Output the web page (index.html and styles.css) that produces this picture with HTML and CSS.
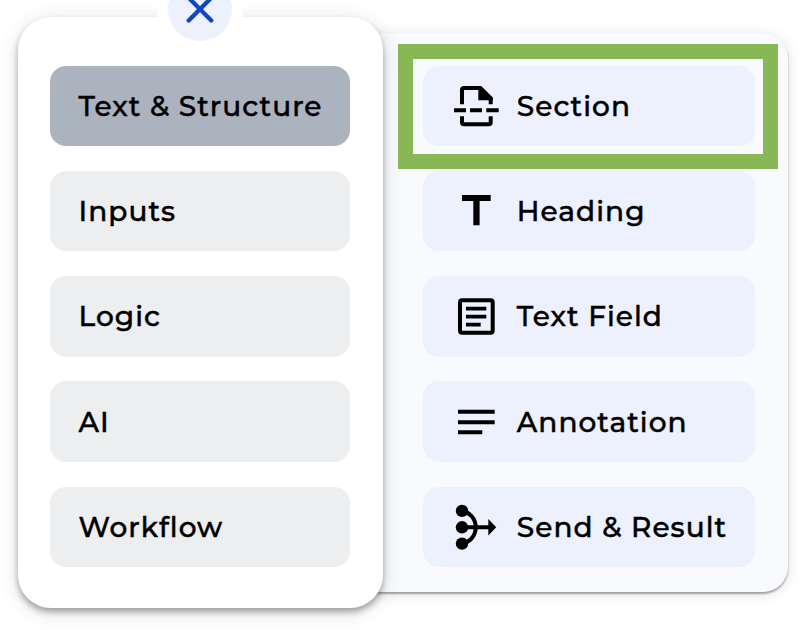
FILE: index.html
```html
<!DOCTYPE html>
<html lang="en">
<head>
<meta charset="UTF-8">
<meta name="viewport" content="width=device-width, initial-scale=1.0">
<title>Add Element</title>

<link rel="stylesheet" href="styles.css">
</head>

<body>

<div class="picker">
    <div class="categories">
        <button class="close-btn" aria-label="Close">
            <svg viewBox="0 0 64 64"><path d="M20.7 20.8 43.3 43.4M43.3 20.8 20.7 43.4"/></svg>
        </button>
        <button class="category active">Text &amp; Structure</button>
        <button class="category">Inputs</button>
        <button class="category">Logic</button>
        <button class="category">AI</button>
        <button class="category">Workflow</button>
    </div>

    <div class="elements">
        <button class="element highlighted">
            <svg class="icon" viewBox="0 0 48 48">
                <path class="line" d="M10 22.3V8Q10 6 12 6H28L38.7 16.5V22.3M10 34.3V40.2Q10 42.2 12 42.2H36.7Q38.7 42.2 38.7 40.2V34.3"/>
                <path d="M26.3 4H29L40.7 15.5V18.3H26.3ZM2 26.3H14V30.3H2ZM18 26.3H30V30.3H18ZM34.3 26.3H46.7V30.3H34.3Z"/>
            </svg>
            <span>Section</span>
        </button>
        <button class="element">
            <svg class="icon" viewBox="0 0 48 48">
                <path d="M10 8H38.7V14.1H27.6V38.3H21.3V14.1H10Z"/>
            </svg>
            <span>Heading</span>
        </button>
        <button class="element">
            <svg class="icon" viewBox="0 0 48 48">
                <rect class="line" x="8" y="8.3" width="32.7" height="32.4" rx="2"/>
                <path d="M14 14.8H34.3V18.6H14ZM14 22.8H34.3V26.6H14ZM14 30.8H28.7V34.6H14Z"/>
            </svg>
            <span>Text Field</span>
        </button>
        <button class="element">
            <svg class="icon" viewBox="0 0 48 48">
                <path d="M6 11.8H42.7V15.8H6ZM6 22.2H42.7V26.2H6ZM6 32.3H30.3V36.3H6Z"/>
            </svg>
            <span>Annotation</span>
        </button>
        <button class="element">
            <svg class="icon" viewBox="0 0 48 48">
                <path class="line" d="M10 7.7C17 9 23.7 15 23.7 24.3S17 39.5 10 40.7M10 24.3H38"/>
                <circle cx="10" cy="7.9" r="6.2"/>
                <circle cx="10" cy="24.3" r="6.2"/>
                <circle cx="10" cy="40.6" r="6.2"/>
                <path d="M36.3 16 44.2 24.2 36.3 32.4Z"/>
            </svg>
            <span>Send &amp; Result</span>
        </button>
    </div>
</div>

</body>
</html>
```
FILE: styles.css
```css
body {
    margin: 0;
    height: 630px;
    overflow: hidden;
    background: white;
    font-family: Montserrat, Inter, sans-serif;
}

.picker {
    display: flex;
    align-items: flex-start;
    padding: 16.5px 0 0 17.5px;
}

.categories,
.elements {
    box-sizing: border-box;
    display: flex;
    flex-direction: column;
    gap: 24.75px;
}

.categories {
    position: relative;
    z-index: 1;
    width: 365px;
    height: 591.5px;
    padding: 49px 32.5px 0;
    background: white;
    border-radius: 33px;
    box-shadow: 0 4px 6px rgba(0, 0, 0, 0.32), 0 4px 22px rgba(0, 0, 0, 0.12);
}

.elements {
    width: 437.5px;
    height: 559.5px;
    margin: 16px 0 0 -32px;
    padding: 33px 33px 0 72.7px;
    background: #f8fafd;
    border-radius: 0 25px 25px 0;
    box-shadow: 0 2px 2px rgba(0, 0, 0, 0.32), 0 2px 14px rgba(0, 0, 0, 0.12);
}

button {
    border: none;
    padding: 0;
    font: inherit;
    color: black;
    cursor: pointer;
}

.category,
.element {
    position: relative;
    display: flex;
    align-items: center;
    flex: none;
    height: 80.5px;
    border-radius: 16px;
    font-size: 28px;
    font-weight: 500;
    letter-spacing: 1.04px;
    line-height: 1;
    white-space: nowrap;
    -webkit-text-stroke: 0.45px black;
}

.category {
    padding-left: 28.5px;
    background: #edeef0;
}

.category.active {
    background: #abb3bf;
}

.element {
    gap: 16.8px;
    padding-left: 28.8px;
    background: #edf1fe;
}

.element.highlighted {
    z-index: 1;
}

.highlighted::after {
    content: "";
    position: absolute;
    inset: -21.3px -23.3px -23.3px -25.5px;
    border: 15px solid #88b755;
}

.icon {
    flex: none;
    width: 48px;
    height: 48px;
}

.icon .line {
    fill: none;
    stroke: black;
    stroke-width: 4;
}

.close-btn {
    position: absolute;
    top: -39.5px;
    left: 150.5px;
    width: 64px;
    height: 64px;
    border-radius: 50%;
    background: #edf1fe;
    box-shadow: 0 0 0 11px white;
}

.close-btn svg {
    display: block;
    stroke: #1447bd;
    stroke-width: 4.3;
    stroke-linecap: round;
}
```
